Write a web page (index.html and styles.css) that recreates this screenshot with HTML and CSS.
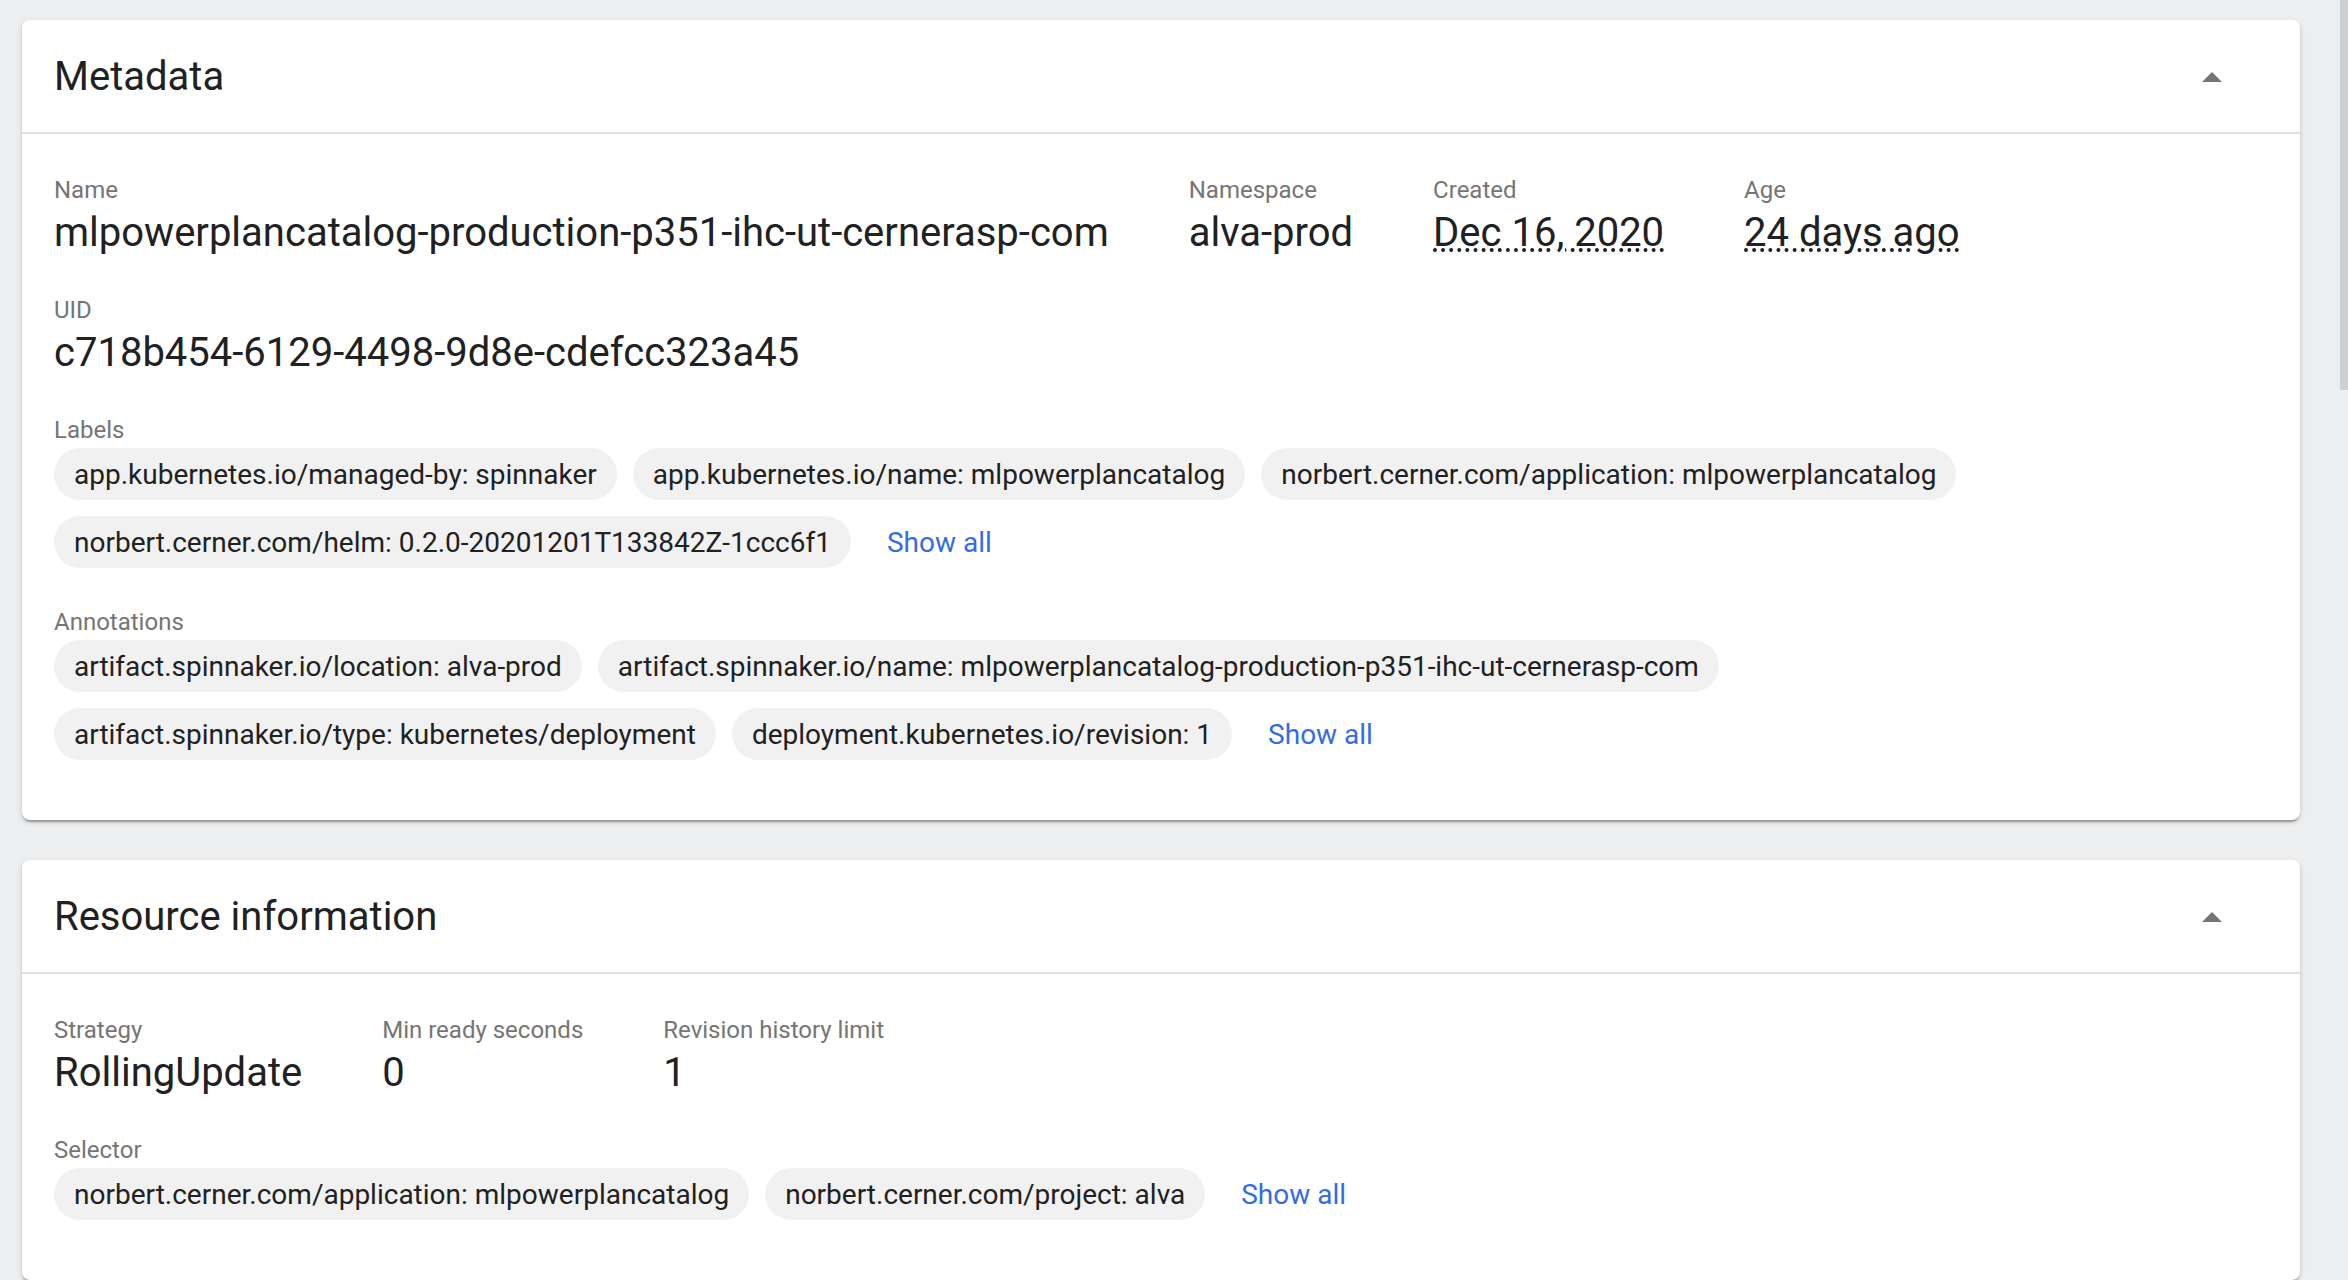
FILE: index.html
```html
<!DOCTYPE html>
<html lang="en">
<head>
<meta charset="utf-8">
<title>Deployment details</title>
<link rel="stylesheet" href="styles.css">
</head>
<body>
<div class="page">
<main class="content">
  <section class="card">
    <header class="card-header">
      <h2 class="card-title">Metadata</h2>
      <button class="toggle" type="button" aria-label="Collapse metadata"><svg width="20" height="10" viewBox="0 0 20 10"><path d="M0 10 10 0 20 10z"/></svg></button>
    </header>
    <div class="card-body">
      <dl class="props">
        <div class="prop"><dt>Name</dt><dd>mlpowerplancatalog-production-p351-ihc-ut-cernerasp-com</dd></div>
        <div class="prop"><dt>Namespace</dt><dd>alva-prod</dd></div>
        <div class="prop"><dt>Created</dt><dd><span class="hint">Dec 16, 2020</span></dd></div>
        <div class="prop"><dt>Age</dt><dd><span class="hint">24 days ago</span></dd></div>
        <div class="prop"><dt>UID</dt><dd>c718b454-6129-4498-9d8e-cdefcc323a45</dd></div>
      </dl>
      <h3 class="label">Labels</h3>
      <div class="chips">
        <span class="chip">app.kubernetes.io/managed-by: spinnaker</span>
        <span class="chip">app.kubernetes.io/name: mlpowerplancatalog</span>
        <span class="chip">norbert.cerner.com/application: mlpowerplancatalog</span>
        <span class="chip">norbert.cerner.com/helm: 0.2.0-20201201T133842Z-1ccc6f1</span>
        <a class="show-all" href="#labels">Show all</a>
      </div>
      <h3 class="label">Annotations</h3>
      <div class="chips">
        <span class="chip">artifact.spinnaker.io/location: alva-prod</span>
        <span class="chip">artifact.spinnaker.io/name: mlpowerplancatalog-production-p351-ihc-ut-cernerasp-com</span>
        <span class="chip">artifact.spinnaker.io/type: kubernetes/deployment</span>
        <span class="chip">deployment.kubernetes.io/revision: 1</span>
        <a class="show-all" href="#annotations">Show all</a>
      </div>
    </div>
  </section>
  <section class="card">
    <header class="card-header">
      <h2 class="card-title">Resource information</h2>
      <button class="toggle" type="button" aria-label="Collapse resource information"><svg width="20" height="10" viewBox="0 0 20 10"><path d="M0 10 10 0 20 10z"/></svg></button>
    </header>
    <div class="card-body">
      <dl class="props">
        <div class="prop"><dt>Strategy</dt><dd>RollingUpdate</dd></div>
        <div class="prop"><dt>Min ready seconds</dt><dd>0</dd></div>
        <div class="prop"><dt>Revision history limit</dt><dd>1</dd></div>
      </dl>
      <h3 class="label">Selector</h3>
      <div class="chips">
        <span class="chip">norbert.cerner.com/application: mlpowerplancatalog</span>
        <span class="chip">norbert.cerner.com/project: alva</span>
        <a class="show-all" href="#selector">Show all</a>
      </div>
    </div>
  </section>
</main>
<div class="scrollbar"><div class="thumb"></div></div>
</div>
</body>
</html>
```
FILE: styles.css
```css
* { box-sizing: border-box; }
body {
  margin: 0;
  background: #edeef0;
  color: #212121;
  font-family: Roboto, sans-serif;
}
.page { display: flex; height: 100vh; overflow: hidden; }
.content { flex: 1; padding: 20px 40px 0 22px; }
.card {
  margin-bottom: 40px;
  background: #fff;
  border-radius: 8px;
  box-shadow:
    0 4px 2px -2px rgba(0, 0, 0, .2),
    0 2px 2px rgba(0, 0, 0, .14),
    0 2px 6px rgba(0, 0, 0, .12);
}
.card-header {
  display: flex;
  align-items: center;
  justify-content: space-between;
  height: 114px;
  padding: 2px 68px 0 32px;
  border-bottom: 2px solid #e0e0e0;
}
.card-title { margin: 0; font-size: 40px; font-weight: 400; line-height: 48px; }
.toggle { display: flex; padding: 10px; border: 0; background: none; }
.toggle svg { fill: #757575; }
.card-body { padding: 40px 32px 22px; }
.props { display: flex; flex-wrap: wrap; margin: 0; column-gap: 80px; }
.prop { height: 120px; }
dt, .label { margin: 0; color: #757575; font-size: 24px; font-weight: 400; line-height: 32px; }
dd { margin: 0; font-size: 40px; line-height: 54px; }
.hint { text-decoration: underline dotted 4px; }
.chips { display: flex; flex-wrap: wrap; align-items: center; gap: 16px; max-width: 1960px; padding: 2px 0 38px; }
.chip { padding: 2px 20px 0; border-radius: 26px; background: #f1f1f1; font-size: 28px; line-height: 50px; }
.show-all { margin-left: 20px; color: #326de6; font-size: 28px; text-decoration: none; }
.scrollbar { width: 8px; }
.thumb { height: 390px; background: #cfd0d2; }
```
